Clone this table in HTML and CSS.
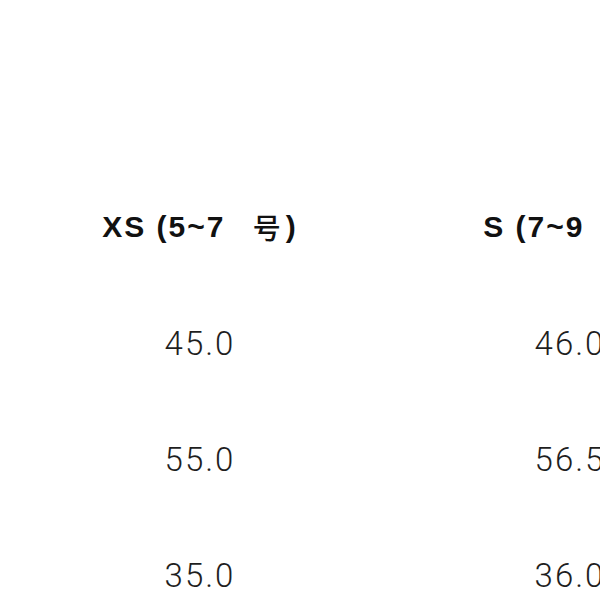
FILE: index.html
```html
<!DOCTYPE html>
<html lang="zh-CN">
<head>
<meta charset="utf-8">
<title>尺码表</title>
<link rel="stylesheet" href="styles.css">
</head>
<body>
<div class="viewport">
  <div class="table">
    <div class="cell head">XS (5~7 <span class="cjk">号</span>)</div>
    <div class="cell head">S (7~9 <span class="cjk">号</span>)</div>
    <div class="cell num">45.0</div>
    <div class="cell num">46.0</div>
    <div class="cell num">55.0</div>
    <div class="cell num">56.5</div>
    <div class="cell num">35.0</div>
    <div class="cell num">36.0</div>
  </div>
</div>
</body>
</html>
```
FILE: styles.css
```css
html, body {
  margin: 0;
  padding: 0;
  background: #ffffff;
}
.viewport {
  width: 600px;
  height: 600px;
  overflow: hidden;
}
.table {
  display: grid;
  grid-template-columns: 370px 370px;
  grid-auto-rows: 116px;
  padding-top: 169px;
  padding-left: 15px;
  width: max-content;
}
.cell {
  display: flex;
  align-items: center;
  justify-content: center;
  white-space: pre;
}
.head {
  font-family: "Liberation Sans", Arial, "Noto Sans CJK SC", sans-serif;
  font-weight: 700;
  font-size: 30px;
  letter-spacing: 2px;
  color: #111111;
}
.cjk {
  font-family: "Noto Sans CJK SC", sans-serif;
  font-weight: 500;
  font-size: 28px;
  margin: 0 3px 0 17px;
}
.num {
  font-family: Roboto, "Liberation Sans", sans-serif;
  font-weight: 300;
  font-size: 33px;
  letter-spacing: 2px;
  color: #1e1e1e;
}
```
